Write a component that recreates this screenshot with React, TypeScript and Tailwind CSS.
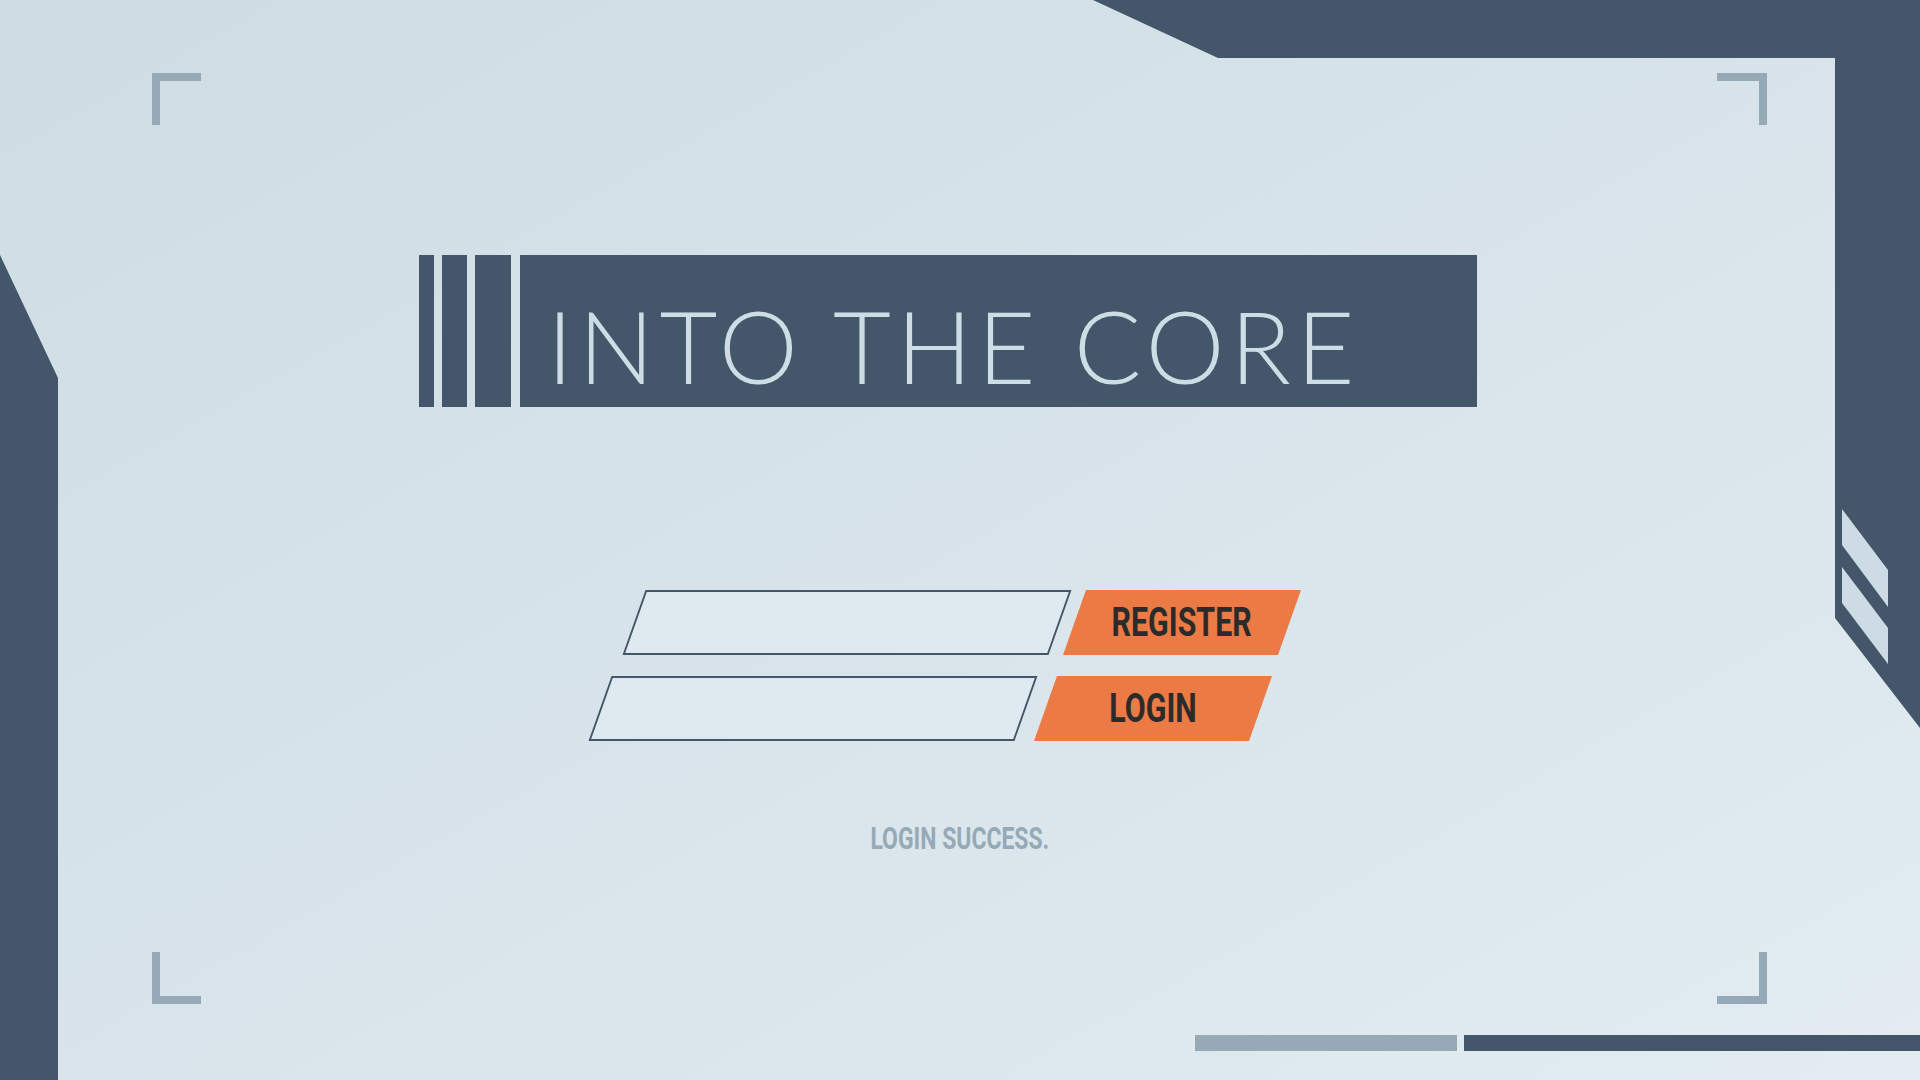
import React from "react";

const DARK = "#44566a";

function Decorations() {
  return (
    <svg
      className="absolute inset-0 pointer-events-none"
      width="1920"
      height="1080"
      viewBox="0 0 1920 1080"
    >
      <polygon points="1093,0 1920,0 1920,728 1835,618 1835,58 1218,58" fill={DARK} />
      <polygon points="0,255 58,378 58,1080 0,1080" fill={DARK} />
      <polygon points="1842,509 1888,570 1888,607 1842,545" fill="#cddce4" />
      <polygon points="1842,567 1888,628 1888,664 1842,603" fill="#cddce4" />
      <g fill="#95a9b7">
        <rect x="152" y="73" width="49" height="8" />
        <rect x="152" y="73" width="8" height="52" />
        <rect x="1717" y="73" width="50" height="8" />
        <rect x="1759" y="73" width="8" height="52" />
        <rect x="152" y="952" width="8" height="52" />
        <rect x="152" y="996" width="49" height="8" />
        <rect x="1759" y="952" width="8" height="52" />
        <rect x="1717" y="996" width="50" height="8" />
        <rect x="1195" y="1035" width="262" height="16" />
      </g>
      <rect x="1464" y="1035" width="456" height="16" fill={DARK} />
    </svg>
  );
}

function Row({
  ml,
  gap,
  label,
  top,
}: {
  ml: string;
  gap: string;
  label: string;
  top: string;
}) {
  return (
    <div className={`flex ${ml} ${gap} ${top}`}>
      <div className="w-[426px] h-[65px] -skew-x-[19.5deg] border-2 border-[#44566a] bg-[#dfeaf0]" />
      <button className="w-[238px] h-[65px] bg-[#ec7a45] flex items-center justify-center [clip-path:polygon(23px_0,100%_0,calc(100%_-_23px)_100%,0_100%)]">
        <span
          className="inline-block scale-x-[0.74] text-[41px] leading-none font-bold text-[#2b2b2b]"
          style={{ fontFamily: "Roboto, 'Liberation Sans', sans-serif" }}
        >
          {label}
        </span>
      </button>
    </div>
  );
}

export default function App() {
  return (
    <div className="relative w-full h-[1080px] overflow-hidden bg-gradient-to-br from-[#cedce4] to-[#e2ecf1]">
      <Decorations />
      <div className="relative flex flex-col">
        <div className="flex mt-[255px] ml-[419px] h-[152px]">
          <div className="w-[15px] bg-[#44566a]" />
          <div className="w-[25px] ml-[8px] bg-[#44566a]" />
          <div className="w-[36px] ml-[8px] bg-[#44566a]" />
          <div className="w-[957px] ml-[9px] bg-[#44566a] pl-[27px] pt-[40px]">
            <h1
              className="text-[100px] leading-none font-light text-[#cddde5] tracking-[0.055em] whitespace-nowrap"
              style={{ fontFamily: "Lato, 'Open Sans', sans-serif" }}
            >
              INTO THE CORE
            </h1>
          </div>
        </div>
        <Row ml="ml-[634px]" gap="gap-[3px]" top="mt-[183px]" label="REGISTER" />
        <Row ml="ml-[600px]" gap="gap-[8px]" top="mt-[21px]" label="LOGIN" />
        <div className="mt-[82px] w-full flex justify-center">
          <span
            className="inline-block scale-x-[0.74] text-[31px] leading-none font-bold text-[#95a9b7] whitespace-nowrap"
            style={{ fontFamily: "Roboto, 'Liberation Sans', sans-serif" }}
          >
            LOGIN SUCCESS.
          </span>
        </div>
      </div>
    </div>
  );
}
